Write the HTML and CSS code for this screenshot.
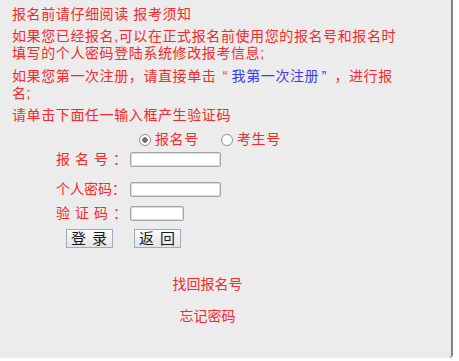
FILE: index.html
```html
<!DOCTYPE html>
<html lang="zh-CN">

<head>
    <meta charset="UTF-8">
    <title>报名登录</title>
    <link rel="stylesheet" href="styles.css">
</head>

<body>
    <div class="panel">
        <p class="title">报名前请仔细阅读 报考须知</p>
        <p class="note note-first">如果您已经报名,可以在正式报名前使用您的报名号和报名时<br>填写的个人密码登陆系统修改报考信息;</p>
        <p class="note note-second"><span>如果您第一次注册，请直接单击</span><span class="quote quote-open">“</span><a class="first-reg" href="#">我第一次注册</a><span class="quote quote-close blue">”</span><span>，进行报</span><br><span>名;</span></p>
        <p class="note">请单击下面任一输入框产生验证码</p>

        <!-- 登录方式 -->
        <div class="login-type">
            <label class="radio"><span class="dot checked"></span>报名号</label>
            <label class="radio"><span class="dot"></span>考生号</label>
        </div>

        <!-- 登录表单 -->
        <form class="login-form">
            <div class="row row-name">
                <span class="field-name"><span class="spaced">报名号</span>：</span>
                <input class="text-box" type="text">
            </div>
            <div class="row row-pass">
                <span class="field-name">个人密码：</span>
                <input class="text-box" type="password">
            </div>
            <div class="row row-code">
                <span class="field-name"><span class="spaced">验证码</span>：</span>
                <input class="text-box short" type="text">
            </div>
            <div class="buttons">
                <button class="btn" type="button">登 录</button>
                <button class="btn" type="button">返 回</button>
            </div>
        </form>

        <div class="links">
            <a class="find-no" href="#">找回报名号</a>
            <a class="forget" href="#">忘记密码</a>
        </div>
    </div>
</body>

</html>
```

FILE: styles.css
```css
* {
    box-sizing: border-box;
}

body {
    margin: 0;
    background: #fff;
    font-family: "Liberation Sans", "Noto Sans CJK SC", sans-serif;
    font-size: 14px;
    line-height: 17px;
    color: #f52a2a;
}

.panel {
    width: 453px;
    height: 358px;
    padding: 6px 0 0 12px;
    background: #ececec;
    border-right: 2px solid #7c8494;
    border-bottom-right-radius: 4px;
}

p {
    margin: 0;
}

.title,
.note {
    letter-spacing: 0.6px;
}

.title {
    margin-bottom: 5px;
}

.note {
    width: 396px;
}

.note-first {
    margin-bottom: 6px;
}

.note-second {
    margin-bottom: 5px;
}

/* 全角引号 */
.quote {
    display: inline-block;
    width: 14px;
    margin: 0 0.6px;
}

.quote-open {
    text-align: right;
    padding-right: 3px;
}

.quote-close {
    text-align: left;
    padding-left: 2px;
}

.blue,
.first-reg {
    color: #3a3af0;
    text-decoration: none;
}

.login-type {
    display: flex;
    margin: 7px 0 0 127px;
    height: 17px;
    letter-spacing: 0.6px;
}

.radio {
    display: flex;
    align-items: center;
    width: 82px;
}

.dot {
    display: inline-block;
    width: 12px;
    height: 12px;
    margin-right: 4px;
    border: 1px solid #8f8f8f;
    border-radius: 50%;
    background: #fff;
}

.dot.checked {
    background: radial-gradient(circle, #6f6f6f 0, #6f6f6f 2.5px, #fff 3px);
}

.login-form {
    margin: 4px 0 0 0;
}

.row {
    display: flex;
    align-items: center;
    height: 15px;
}

.row-pass {
    margin-top: 15px;
}

.row-code {
    margin-top: 9px;
}

.field-name {
    width: 71px;
    margin-left: 44px;
    margin-right: 3px;
    white-space: nowrap;
}

.spaced {
    letter-spacing: 5px;
}

.text-box {
    width: 91px;
    height: 15px;
    padding: 0 2px;
    border: 1px solid #a6a6a6;
    border-radius: 2px;
    background: #fff;
    box-shadow: inset 0 0 0 1px #dcdcdc;
    font-size: 12px;
}

.text-box.short {
    width: 54px;
}

.buttons {
    display: flex;
    gap: 21px;
    margin: 8px 0 0 54px;
}

.btn {
    width: 47px;
    height: 19px;
    padding: 0;
    border: 1px solid #9aacc4;
    background: linear-gradient(#fbfbfb, #e4e4e4);
    font-family: "Liberation Sans", "Noto Sans CJK SC", sans-serif;
    font-size: 15px;
    line-height: 16px;
    color: #1a1a1a;
    letter-spacing: 1px;
    white-space: nowrap;
}

.links {
    width: 391px;
    margin-top: 28px;
    text-align: center;
}

.links a {
    display: block;
    color: #f52a2a;
    text-decoration: none;
}

.forget {
    margin-top: 15px;
}
```
